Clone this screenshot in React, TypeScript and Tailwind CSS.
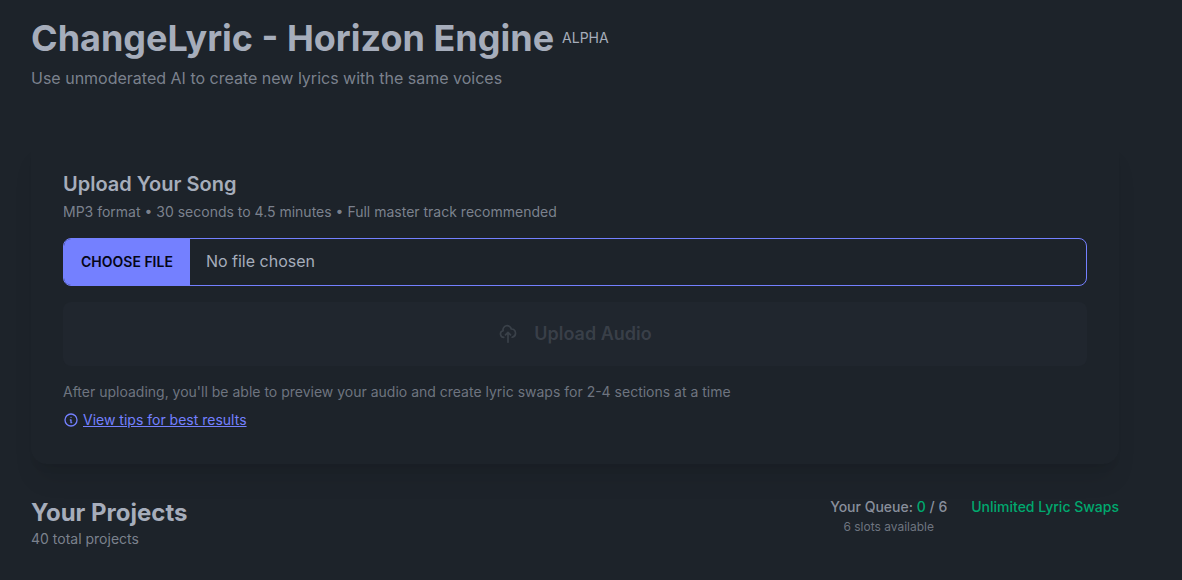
import { useState } from "react";

interface QueueStatusProps {
  used: number;
  total: number;
}

function QueueStatus({ used, total }: QueueStatusProps) {
  return (
    <div className="text-center">
      <div className="text-sm font-medium text-[#a6adbb]/80">
        Your Queue: <span className="text-[#00a96e]">{used}</span> / {total}
      </div>
      <div className="mt-0.5 text-xs leading-4 text-[#a6adbb]/60">{total - used} slots available</div>
    </div>
  );
}

export default function App() {
  const [file, setFile] = useState<File | null>(null);

  return (
    <div className="min-h-screen bg-[#1d232a] pt-[18px] pr-[63px] pb-8 pl-[31px] font-['Inter',sans-serif] text-[#a6adbb]">
      {/* Page Header */}
      <header>
        <h1 className="flex items-center gap-2 text-4xl font-bold">
          ChangeLyric - Horizon Engine <span className="text-sm font-normal">ALPHA</span>
        </h1>
        <p className="mt-2 text-base text-[#a6adbb]/70">
          Use unmoderated AI to create new lyrics with the same voices
        </p>
      </header>

      {/* Upload Card */}
      <section className="mt-12 rounded-2xl p-8 shadow-xl shadow-black/8">
        <h2 className="text-xl font-semibold">Upload Your Song</h2>
        <label htmlFor="song" className="mt-1 block text-sm text-[#a6adbb]/70">
          MP3 format • 30 seconds to 4.5 minutes • Full master track recommended
        </label>
        <input
          id="song"
          type="file"
          accept="audio/mpeg"
          onChange={(e) => setFile(e.target.files?.[0] ?? null)}
          className="mt-4 block h-12 w-full overflow-hidden rounded-lg border border-[#7480ff] pr-4 text-base leading-[44px] file:mr-4 file:h-full file:border-0 file:bg-[#7480ff] file:px-[17px] file:align-top file:text-sm file:font-semibold file:text-[#050617] file:uppercase"
        />
        <button
          type="button"
          disabled={!file}
          className="mt-4 flex h-16 w-full items-center justify-center gap-4 rounded-lg bg-[#7480ff] text-lg font-semibold text-[#050617] disabled:bg-[#20262e] disabled:text-[#a6adbb]/20"
        >
          <svg className="h-5 w-5" fill="none" viewBox="0 0 24 24" stroke="currentColor" strokeWidth={2} aria-hidden="true">
            <path
              strokeLinecap="round"
              strokeLinejoin="round"
              d="M7 16a4 4 0 01-.88-7.903A5 5 0 1115.9 6L16 6a5 5 0 011 9.9M15 13l-3-3m0 0l-3 3m3-3v12"
            />
          </svg>
          Upload Audio
        </button>
        <p className="mt-4 text-sm text-[#a6adbb]/60">
          After uploading, you'll be able to preview your audio and create lyric swaps for 2-4 sections at a time
        </p>
        <a href="#tips" className="mt-1.5 flex w-fit items-center gap-1 text-sm leading-6 text-[#7480ff]">
          <svg className="h-4 w-4" fill="none" viewBox="0 0 24 24" stroke="currentColor" strokeWidth={2} aria-hidden="true">
            <path
              strokeLinecap="round"
              strokeLinejoin="round"
              d="M13 16h-1v-4h-1m1-4h.01M21 12a9 9 0 11-18 0 9 9 0 0118 0z"
            />
          </svg>
          <span className="underline">View tips for best results</span>
        </a>
      </section>

      {/* Projects */}
      <section className="mt-[33px] flex items-start justify-between">
        <div>
          <h2 className="text-2xl font-bold">Your Projects</h2>
          <p className="text-sm text-[#a6adbb]/70">40 total projects</p>
        </div>
        <div className="flex items-start gap-6">
          <QueueStatus used={0} total={6} />
          <div className="text-sm font-medium text-[#00a96e]">Unlimited Lyric Swaps</div>
        </div>
      </section>
    </div>
  );
}
